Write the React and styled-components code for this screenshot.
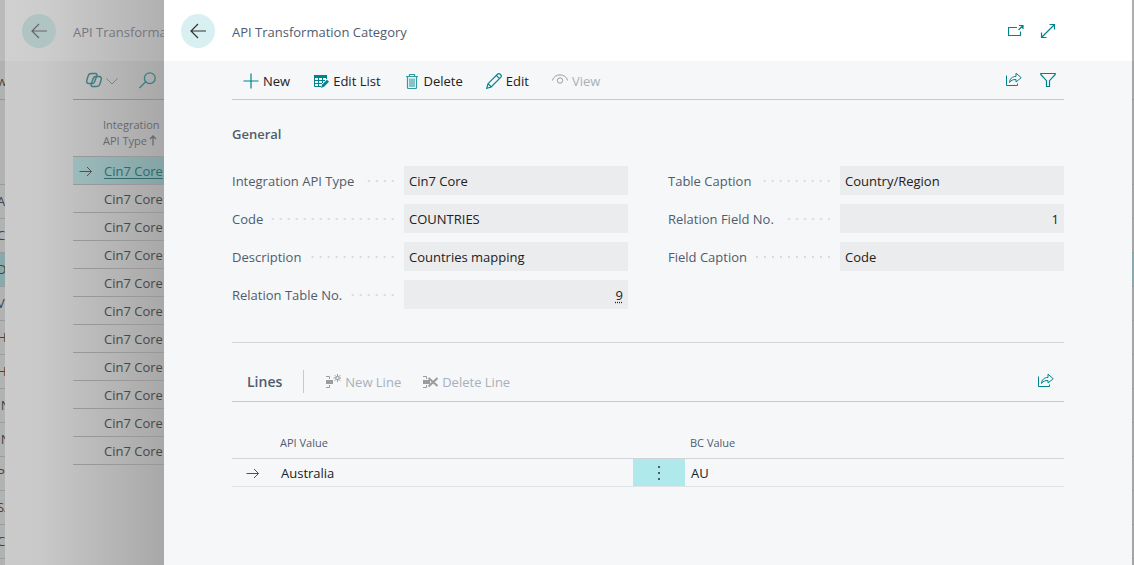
import React from "react";
import styled, { createGlobalStyle, css } from "styled-components";

const teal = "#00838a";
const line = "#c6c9cd";
const slate = "#505c6d";
const ink = "#212121";
const disabled = "#a9b0ba";

const GlobalStyle = createGlobalStyle`
  *, *::before, *::after { box-sizing: border-box; }
  body { margin: 0; }
  body, button, input { font-family: "Open Sans", "Noto Sans", sans-serif; font-size: 13px; }
`;

const Screen = styled.div`
  display: flex;
  min-height: 100vh;
  overflow: hidden;
  background: #a9abab;
`;

/* The page furthest back, visible only at the window's edges */
const Backdrop = styled.div`
  flex: 0 0 ${(p) => p.$width}px;
  overflow: hidden;
  background: ${(p) => p.$tone};
`;
const BackdropHead = styled.div`
  height: 61px;
  background: rgba(255, 255, 255, 0.1);
`;
const BackdropBar = styled.div`
  height: 39px;
  line-height: 40px;
  color: #444;
  border-bottom: 1px solid #939696;
`;
const BackdropRows = styled.div`
  padding-top: 51px;
`;
const BackdropRow = styled.div`
  height: 34px;
  line-height: 32px;
  white-space: nowrap;
  color: #444;
  background: ${(p) => (p.$selected ? "#8aa9aa" : "transparent")};
  border-bottom: 1px solid #989c9c;
`;
const Clipped = styled.span`
  margin-left: -3px;
`;

const PageHeader = styled.header`
  display: flex;
  align-items: center;
  gap: 17px;
  height: 61px;
  padding-left: 17px;
`;
const BackButton = styled.button`
  display: flex;
  flex: none;
  align-items: center;
  justify-content: center;
  width: 34px;
  height: 34px;
  padding: 0;
  border: 0;
  border-radius: 50%;
  background: ${(p) => (p.$dim ? "#b1c4c4" : "#d8f0f1")};
  color: ${(p) => (p.$dim ? "#666" : "#333")};
`;
const Title = styled.h1`
  flex: 1;
  min-width: 0;
  margin: 0;
  padding-top: 3px;
  overflow: hidden;
  font-size: 13px;
  font-weight: 400;
  line-height: 20px;
  white-space: nowrap;
  color: ${(p) => (p.$dim ? "#74777d" : slate)};
`;

/* The list page behind the card */
const ListPage = styled.section`
  flex: 0 0 159px;
  overflow: hidden;
  background: linear-gradient(90deg, #cbcbcb, #c8c8c8 24%, #a8a8a8);
  ${PageHeader} {
    background: rgba(255, 255, 255, 0.1);
  }
`;
const ListBody = styled.div`
  padding-left: 68px;
`;
const ListTools = styled.div`
  display: flex;
  align-items: center;
  gap: 21px;
  height: 39px;
  padding-left: 13px;
  border-bottom: 1px solid #8e8e90;
`;
const ListTable = styled.table`
  width: 100%;
  table-layout: fixed;
  border-collapse: separate;
  border-spacing: 0;
  white-space: nowrap;
  color: #474747;
  th {
    height: 57px;
    padding: 9px 0 0;
    font-size: 11px;
    font-weight: 400;
    line-height: 16px;
    text-align: left;
    color: #66686e;
    border-bottom: 1px solid #989898;
  }
  td {
    height: 28px;
    padding: 0 0 0 1px;
    overflow: hidden;
    line-height: 18px;
    border-bottom: 1px solid #989898;
  }
  td:first-child {
    padding-left: 6px;
  }
`;
const ListRow = styled.tr`
  background: ${(p) => (p.$selected ? "linear-gradient(90deg, #9bbbbc, #83a3a4)" : "none")};
`;
const RowLink = styled.a`
  color: #2d6a6d;
  text-underline-offset: 2px;
`;
const ChevronSlot = styled.span`
  display: flex;
  padding-left: 4px;
  color: #808080;
`;

const Card = styled.main`
  flex: 1;
  min-width: 0;
  background: #f5f7f9;
`;
const CardBody = styled.div`
  padding: 0 68px;
`;
const IconGroup = styled.div`
  display: flex;
  align-items: center;
  gap: 18px;
  margin-left: auto;
  padding-right: 8px;
`;
const CardHeader = styled(PageHeader)`
  padding-right: 68px;
  background: #fff;
  ${IconGroup} { gap: 16px; }
`;
const IconButton = styled.button`
  display: flex;
  padding: 0;
  border: 0;
  background: none;
  color: ${(p) => (p.$dim ? "#3b7d80" : teal)};
`;
const Toolbar = styled.div`
  display: flex;
  align-items: center;
  gap: 23px;
  height: 39px;
  padding-left: 11px;
  border-bottom: 1px solid ${line};
`;
const Action = styled.button`
  display: flex;
  align-items: center;
  gap: 4px;
  padding: 2px 0 0;
  border: 0;
  background: none;
  line-height: 20px;
  white-space: nowrap;
  color: ${ink};
  svg { color: ${teal}; }
  &:disabled {
    color: ${disabled};
    svg { color: #9a9c9e; }
  }
`;
const SectionTitle = styled.h2`
  margin: 0;
  font-size: 13px;
  font-weight: 600;
  line-height: 20px;
  color: ${slate};
`;
const General = styled.section`
  padding: 24px 0 33px;
  border-bottom: 1px solid #d3d6da;
`;
const Fields = styled.div`
  display: grid;
  grid-template-columns: 1fr 1fr;
  gap: 40px;
  padding-top: 22px;
`;
const FieldColumn = styled.div`
  display: flex;
  flex-direction: column;
  gap: 9px;
`;
const FieldRow = styled.div`
  display: flex;
  height: 29px;
`;
const FieldLabel = styled.label`
  display: flex;
  flex: 0 0 172px;
  align-items: center;
  padding-right: 10px;
  white-space: nowrap;
  color: ${slate};
  &::after {
    content: "";
    flex: 1;
    height: 2px;
    margin-left: 8px;
    background: linear-gradient(90deg, transparent 6px, #d9dbde 6px) right top / 8px 2px repeat-x;
  }
`;
const FieldInput = styled.input`
  flex: 1;
  min-width: 0;
  padding: 0 5px;
  border: 0;
  outline: 0;
  border-radius: 0;
  background: #ebecee;
  color: ${ink};
  ${(p) => p.$numeric && css`text-align: right;`}
  ${(p) => p.$lookup && css`
    text-decoration: underline dotted;
    text-underline-offset: 2px;
  `}
`;
const LinesBar = styled.div`
  display: flex;
  align-items: center;
  gap: 21px;
  height: 41px;
  margin-top: 18px;
  padding-left: 15px;
  border-bottom: 1px solid ${line};
  ${IconGroup} { padding-right: 10px; }
  ${SectionTitle} {
    padding-top: 2px;
    font-size: 14px;
  }
`;
const Separator = styled.div`
  width: 1px;
  height: 23px;
  background: ${line};
`;
const LinesTable = styled.table`
  width: 100%;
  margin-top: 29px;
  border-collapse: separate;
  border-spacing: 0;
  table-layout: fixed;
  color: ${ink};
  th {
    height: 28px;
    padding: 0 5px 4px;
    font-size: 11px;
    font-weight: 400;
    text-align: left;
    color: ${slate};
    border-bottom: 1px solid #d0d3d7;
  }
  td {
    height: 28px;
    padding: 0 6px;
    line-height: 18px;
    border-bottom: 1px solid #e1e4e7;
  }
  td:first-child { padding-left: 14px; }
`;
const MenuCell = styled.td`
  background: #b0e9eb;
`;
const MenuButton = styled(IconButton)`
  margin: 0 auto;
  color: ${slate};
`;
const BlockSvg = styled.svg`
  display: block;
  flex: none;
`;
const SortSvg = styled.svg`
  display: inline-block;
  margin-left: 2px;
  vertical-align: -1px;
`;

const Icon = ({ size = 16, height = size, children, ...rest }) => (
  <BlockSvg width={size} height={height} viewBox={`0 0 ${size} ${height}`} fill="none" stroke="currentColor" strokeWidth="1" aria-hidden="true" {...rest}>
    {children}
  </BlockSvg>
);
const BackIcon = () => (
  <Icon strokeWidth="1.2"><path d="M16 8H1M8 1L1 8l7 7" /></Icon>
);
const RowArrow = () => (
  <Icon size={14} stroke="#505050"><path d="M.5 7.500h12M8 3l4.500 4.500L8 12" /></Icon>
);
const SortArrow = () => (
  <SortSvg width="8" height="11" viewBox="0 0 8 11" fill="none" stroke="currentColor" strokeWidth="1.300" aria-hidden="true">
    <path d="M4 10.500V1M1 4l3-3 3 3" />
  </SortSvg>
);
const PlusIcon = () => (
  <Icon><path d="M8 .5v15M.5 8h15" strokeWidth="1.200" /></Icon>
);
const EditListIcon = () => (
  <Icon>
    <path d="M1 2h13v3H1z" fill="currentColor" stroke="none" />
    <path d="M1.500 4v9.500H8M1 7.500h11M1 10.500h8M5.500 4v9.500M9.500 4v6M13.500 4v2" />
    <path d="M8 15l1-3.300 5-5 2 2-5 5z" fill="currentColor" stroke="none" />
  </Icon>
);
const TrashIcon = () => (
  <Icon>
    <path d="M2 3.500h12M5.500 3V1.500h5V3M3.500 4v10.500q0 1 1 1h7q1 0 1-1V4" strokeWidth="1.200" strokeOpacity=".8" />
    <path d="M5 5.500h6V14H5z" fill="currentColor" fillOpacity=".45" stroke="none" />
  </Icon>
);
const PencilIcon = () => (
  <Icon><path d="M.7 15.300l1.300-4.600L11.700 1c1.700-1.200 4.500 1.400 3.200 3.200L5.200 14zM2 10.700L5.200 14M10.300 2.400l3.200 3.200" strokeWidth="1.200" /></Icon>
);
const EyeIcon = () => (
  <Icon><path d="M.5 7.500C2 0 14 0 15.500 7.500" /><circle cx="8" cy="7.500" r="2.700" /></Icon>
);
const ShareIcon = () => (
  <Icon>
    <path d="M.5 3.500v10h11V11.500" />
    <path d="M3.500 10.500c.4-4 2.500-6 6.500-6V1.200L15.200 5.700 10 10V7.500C7 7.400 5 8.300 3.500 10.500z" strokeLinejoin="round" />
  </Icon>
);
const FilterIcon = () => (
  <Icon><path d="M.8 1.500h14.400v1L9.500 8.700v5.800h-3V8.700L.8 2.500z" strokeWidth="1.200" /></Icon>
);
const PopOutIcon = () => (
  <Icon><path d="M9 4.500H.500v8h12V8.500M10.500 7l4.500-4.500M11 2.500h4V6" strokeWidth="1.200" /></Icon>
);
const ExpandIcon = () => (
  <Icon><path d="M1.500 14.500l13-13M9.500 1.500h5v5M1.500 9.500v5h5" strokeWidth="1.200" /></Icon>
);
const CopilotIcon = () => (
  <Icon strokeWidth="1.400">
    <path d="M5.500 1.500h4c1.300 0 1.700.8 1.300 2L8.800 9.500c-.4 1.200-1 2-2.300 2H3C1 11.500.3 10 .8 8.300L2.300 3.500C2.700 2.200 3.800 1.500 5.500 1.500z" />
    <path d="M10.500 14.500h-4c-1.300 0-1.700-.8-1.300-2L7.200 6.500c.4-1.200 1-2 2.300-2H13c2 0 2.700 1.500 2.200 3.200l-1.500 4.800c-.4 1.300-1.500 2-3.200 2z" />
  </Icon>
);
const ChevronIcon = () => (
  <Icon size={12} height={16}><path d="M.5 6.500L6 12l5.500-5.500" /></Icon>
);
const SearchIcon = () => (
  <Icon size={17}><path d="M.5 16l6.500-6.500" strokeWidth="1.300" /><circle cx="10.800" cy="6.200" r="5.400" strokeWidth="1.300" /></Icon>
);
const LineGlyph = () => (
  <>
    <path d="M1 6h7v4H1z" fill="currentColor" stroke="none" />
    <path d="M1 2.500h3.500V5M1 13.500h3.500V11" />
  </>
);
const NewLineIcon = () => (
  <Icon>
    <LineGlyph />
    <path d="M12.500 0v3M12.500 5v3M8.500 4h2.500M14 4h2.500M9.700 1.200l1.700 1.700M15.300 1.200l-1.700 1.700M9.700 6.800l1.700-1.700M15.300 6.800l-1.700-1.700" />
    <circle cx="12.500" cy="4" r="1.600" />
  </Icon>
);
const DeleteLineIcon = () => (
  <Icon>
    <LineGlyph />
    <path d="M6.500 4l9 8M15.500 4l-9 8.500" strokeWidth="2" />
  </Icon>
);
const DotsIcon = () => (
  <Icon size={4} height={16} fill="currentColor" stroke="none">
    <path d="M1 1h2v2H1zM1 7h2v2H1zM1 13h2v2H1z" />
  </Icon>
);

const backRows = [".", "A", "C", "D", "V", "H", "H", "IN", "IN", "P", "SA", "C"];
const listRows = Array.from({ length: 11 }, () => "Cin7 Core");
const fieldColumns = [
  [
    { id: "apiType", label: "Integration API Type", value: "Cin7 Core" },
    { id: "code", label: "Code", value: "COUNTRIES" },
    { id: "description", label: "Description", value: "Countries mapping" },
    { id: "tableNo", label: "Relation Table No.", value: "9", numeric: true, lookup: true },
  ],
  [
    { id: "tableCaption", label: "Table Caption", value: "Country/Region" },
    { id: "fieldNo", label: "Relation Field No.", value: "1", numeric: true },
    { id: "fieldCaption", label: "Field Caption", value: "Code" },
  ],
];

const BackdropPage = ({ width, tone, showText }) => (
  <Backdrop $width={width} $tone={tone} aria-hidden="true">
    <BackdropHead />
    <BackdropBar>{showText && <Clipped>w</Clipped>}</BackdropBar>
    <BackdropRows>
      {backRows.map((text, i) => (
        <BackdropRow key={i} $selected={i === 3}>{showText && <Clipped>{text}</Clipped>}</BackdropRow>
      ))}
    </BackdropRows>
  </Backdrop>
);

export default function App() {
  return (
    <>
      <GlobalStyle />
      <Screen>
        <BackdropPage width={5} tone="#b1b3b3" showText />
        <ListPage>
          <PageHeader>
            <BackButton $dim aria-label="Back to list"><BackIcon /></BackButton>
            <Title as="h2" $dim>API Transforma</Title>
          </PageHeader>
          <ListBody>
            <ListTools>
              <IconButton $dim aria-label="Copilot">
                <CopilotIcon />
                <ChevronSlot><ChevronIcon /></ChevronSlot>
              </IconButton>
              <IconButton $dim aria-label="Search"><SearchIcon /></IconButton>
            </ListTools>
            <ListTable>
              <colgroup>
                <col width="30" />
                <col />
              </colgroup>
              <thead>
                <tr><th /><th>Integration<br />API Type<SortArrow /></th></tr>
              </thead>
              <tbody>
                {listRows.map((name, i) => (
                  <ListRow key={i} $selected={i === 0}>
                    <td>{i === 0 && <RowArrow />}</td>
                    <td>{i === 0 ? <RowLink href="#core">{name}</RowLink> : name}</td>
                  </ListRow>
                ))}
              </tbody>
            </ListTable>
          </ListBody>
        </ListPage>
        <Card>
          <CardHeader>
            <BackButton aria-label="Back"><BackIcon /></BackButton>
            <Title>API Transformation Category</Title>
            <IconGroup>
              <IconButton aria-label="Open in new window"><PopOutIcon /></IconButton>
              <IconButton aria-label="Expand"><ExpandIcon /></IconButton>
            </IconGroup>
          </CardHeader>
          <CardBody>
            <Toolbar>
              <Action><PlusIcon />New</Action>
              <Action><EditListIcon />Edit List</Action>
              <Action><TrashIcon />Delete</Action>
              <Action><PencilIcon />Edit</Action>
              <Action disabled><EyeIcon />View</Action>
              <IconGroup>
                <IconButton aria-label="Share"><ShareIcon /></IconButton>
                <IconButton aria-label="Filter"><FilterIcon /></IconButton>
              </IconGroup>
            </Toolbar>
            <General>
              <SectionTitle>General</SectionTitle>
              <Fields>
                {fieldColumns.map((fields, c) => (
                  <FieldColumn key={c}>
                    {fields.map((f) => (
                      <FieldRow key={f.id}>
                        <FieldLabel htmlFor={f.id}>{f.label}</FieldLabel>
                        <FieldInput id={f.id} readOnly value={f.value} $numeric={f.numeric} $lookup={f.lookup} />
                      </FieldRow>
                    ))}
                  </FieldColumn>
                ))}
              </Fields>
            </General>
            <LinesBar>
              <SectionTitle>Lines</SectionTitle>
              <Separator />
              <Action disabled><NewLineIcon />New Line</Action>
              <Action disabled><DeleteLineIcon />Delete Line</Action>
              <IconGroup>
                <IconButton aria-label="Share lines"><ShareIcon /></IconButton>
              </IconGroup>
            </LinesBar>
            <LinesTable>
              <colgroup>
                <col width="43" />
                <col />
                <col width="52" />
                <col width="379" />
              </colgroup>
              <thead>
                <tr><th /><th>API Value</th><th /><th>BC Value</th></tr>
              </thead>
              <tbody>
                <tr>
                  <td><RowArrow /></td>
                  <td>Australia</td>
                  <MenuCell><MenuButton aria-label="Row menu"><DotsIcon /></MenuButton></MenuCell>
                  <td>AU</td>
                </tr>
              </tbody>
            </LinesTable>
          </CardBody>
        </Card>
        <BackdropPage width={2} tone="#a4a5a5" />
      </Screen>
    </>
  );
}
